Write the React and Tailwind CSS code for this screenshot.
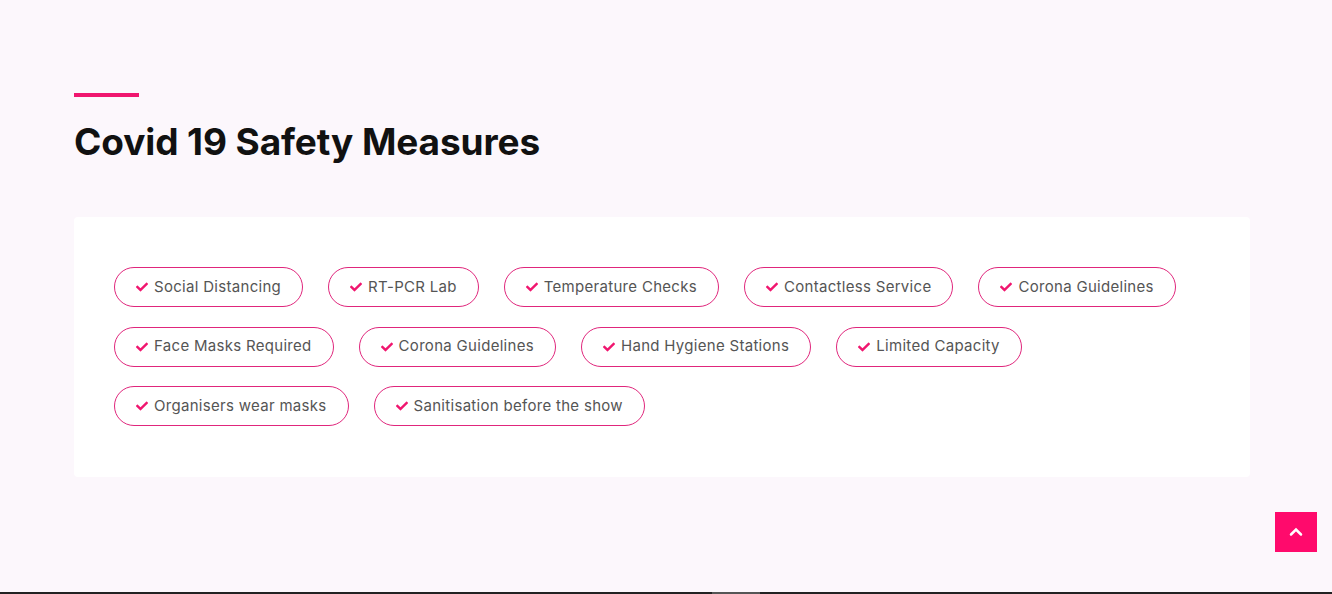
import React from "react";

const measures = [
  "Social Distancing",
  "RT-PCR Lab",
  "Temperature Checks",
  "Contactless Service",
  "Corona Guidelines",
  "Face Masks Required",
  "Corona Guidelines",
  "Hand Hygiene Stations",
  "Limited Capacity",
  "Organisers wear masks",
  "Sanitisation before the show",
];

const Check = () => (
  <svg viewBox="0 0 512 512" className="w-[12px] h-[12px] fill-[#f0166f]">
    <path d="M173.9 439.4l-166.4-166.4c-10-10-10-26.2 0-36.2l36.2-36.2c10-10 26.2-10 36.2 0L192 312.7 432.1 72.6c10-10 26.2-10 36.2 0l36.2 36.2c10 10 10 26.2 0 36.2L210.1 439.4c-10 10-26.2 10-36.2 0z" />
  </svg>
);

const App = () => {
  return (
    <div
      className="min-h-[594px] bg-[#fcf7fc] flex flex-col"
      style={{ fontFamily: "Inter, 'Open Sans', sans-serif" }}
    >
      <div className="flex-1 pl-[74px] pt-[93px]">
        <div className="w-[65px] h-[4px] bg-[#f0166f]" />
        <h1 className="mt-[21px] text-[37px] leading-[48px] font-bold text-[#111111] tracking-[-0.1px]">
          Covid 19 Safety Measures
        </h1>
        <div className="mt-[51px] w-[1176px] bg-white rounded-[4px] px-[40px] pt-[50px] pb-[51px]">
          <div className="flex flex-wrap gap-x-[25px] gap-y-[19.5px] w-[1070px]">
            {measures.map((m, i) => (
              <div
                key={i}
                className="h-[40px] flex items-center gap-[6px] px-[21px] border border-[#e0267c] rounded-full text-[15px] tracking-[0.3px] text-[#555555]"
              >
                <Check />
                <span>{m}</span>
              </div>
            ))}
          </div>
        </div>
      </div>
      <div className="flex justify-end pr-[15px] pb-[40px]">
        <button className="w-[42px] h-[40px] bg-[#ff0a6c] flex items-center justify-center">
          <svg viewBox="0 0 24 24" className="w-[20px] h-[20px] stroke-white fill-none" strokeWidth="3" strokeLinecap="round">
            <path d="M6 15l6-6 6 6" />
          </svg>
        </button>
      </div>
      <div className="h-[2px] bg-[#222222] flex">
        <div className="ml-[712px] w-[48px] bg-[#555555]" />
      </div>
    </div>
  );
};

export default App;
